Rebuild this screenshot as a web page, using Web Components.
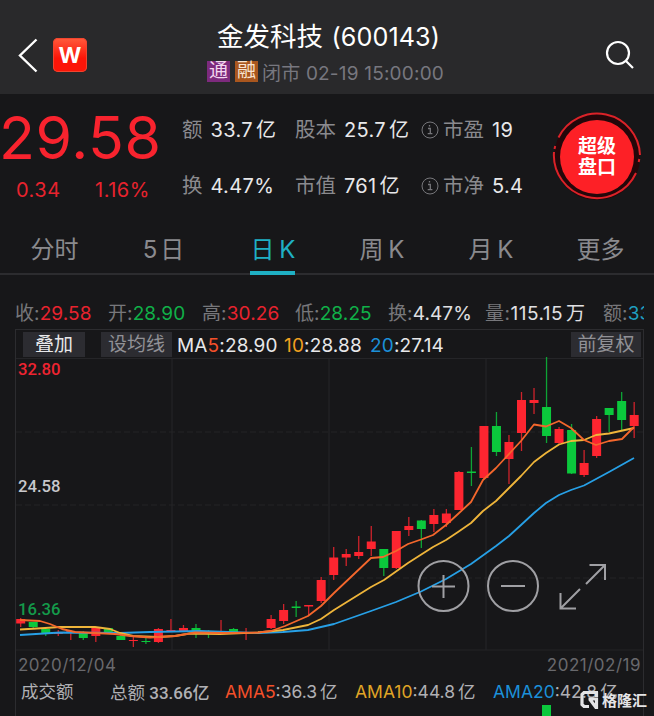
<!DOCTYPE html>
<html lang="zh-CN">
<head>
<meta charset="utf-8">
<title>金发科技 (600143)</title>
<style>
	html, body { margin: 0; background: #171719; }
	body { width: 654px; height: 716px; overflow: hidden; font-family: Inter, "Noto Sans CJK SC", sans-serif; }
</style>
</head>
<body>
<stock-page></stock-page>

<script>
	class NavHeader extends HTMLElement {
		constructor() {
			super();
			this.attachShadow({ mode: 'open' });
			this.shadowRoot.innerHTML = `
				<style>
					:host { display: grid; grid-template-columns: 120px 1fr 120px; height: 94px; background: #29292b; box-sizing: border-box; color: #fff; }
					.left { display: flex; align-items: center; padding: 16px 0 0 17px; gap: 14px; }
					.logo { width: 34px; height: 34px; border-radius: 5px; background: linear-gradient(#ff5b3c, #fb1508 60%); display: flex; align-items: center; justify-content: center; font: 700 22px/34px Inter, sans-serif; box-shadow: inset 0 0 0 1px #f0452f; }
					.mid { display: flex; flex-direction: column; align-items: center; }
					.name { font-size: 26.5px; line-height: 32px; margin-top: 20px; white-space: nowrap; padding-left: 3px; }
					.name span { font-size: 25.2px; letter-spacing: .1px; margin-left: 1px; }
					.sub { display: flex; align-items: center; height: 24px; margin-top: 6px; color: #77777f; font-size: 19px; white-space: nowrap; letter-spacing: .2px; margin-left: -3px; }
					.sub span:last-child { margin-left: -1px; }
					.tag { width: 23px; height: 21px; line-height: 20px; font-size: 19px; text-align: center; color: #f3d6ef; background: #7d2a7d; margin-right: 5px; letter-spacing: 0; }
					.tag.rong { background: #a9561e; color: #f8e3d0; }
					.right { display: flex; align-items: center; justify-content: flex-end; padding: 15px 19px 0 0; }
				</style>
				<div class="left">
					<svg width="22" height="36" viewBox="0 0 22 36" fill="none" stroke="#fff" stroke-width="2.4"><path d="M19.5 2.5 3 18.5l16.500 16"/></svg>
					<div class="logo">W</div>
				</div>
				<div class="mid">
					<div class="name">金发科技 <span>(600143)</span></div>
					<div class="sub"><span class="tag">通</span><span class="tag rong">融</span><span>闭市 02-19 15:00:00</span></div>
				</div>
				<div class="right">
					<svg width="30" height="30" viewBox="0 0 30 30" fill="none" stroke="#fff" stroke-width="2.2"><circle cx="13" cy="13" r="11"/><path d="M21 21l7 7"/></svg>
				</div>
			`;
		}
	}
	customElements.define('nav-header', NavHeader);

	class StatItem extends HTMLElement {
		constructor() {
			super();
			this.attachShadow({ mode: 'open' });
			const info = this.hasAttribute('info')
				? '<svg width="18" height="18" viewBox="0 0 18 18" fill="none" stroke="#77777b" stroke-width="1"><circle cx="9" cy="9" r="8"/><path d="M7 7.500h2.300v5M6.700 12.700h4.700M8.500 4v1.500" stroke-width="1.300"/></svg>'
				: '';
			this.shadowRoot.innerHTML = `
				<style>
					:host { display: flex; align-items: center; height: 28px; line-height: 28px; white-space: nowrap; color: #e8e8ea; font-size: 20px; }
					svg { margin-right: 4px; }
					.label { color: #8a8a8e; font-size: 20.5px; margin-right: 8px; }
					.unit { margin-left: 3px; }
					.value { letter-spacing: .35px; }
				</style>
				${info}<span class="label"><slot name="label"></slot></span><span class="value"><slot></slot></span><span class="unit"><slot name="unit"></slot></span>
			`;
		}
	}
	customElements.define('stat-item', StatItem);

	class SuperButton extends HTMLElement {
		constructor() {
			super();
			this.attachShadow({ mode: 'open' });
			this.shadowRoot.innerHTML = `
				<style>
					:host { display: grid; width: 90px; height: 90px; place-items: center; }
					svg, div { grid-area: 1 / 1; }
					div { color: #fff; font-size: 19px; font-weight: 700; line-height: 21px; text-align: center; z-index: 1; }
				</style>
				<svg width="90" height="90" viewBox="0 0 90 90" fill="none">
					<circle cx="45" cy="45" r="40" stroke="#24070a" stroke-width="6"/>
					<circle cx="45" cy="45" r="37" fill="#fd2026"/>
					<g stroke="#dc2228" stroke-width="2">
						<path d="M6.500 25.500A43 43 0 0 1 88 43"/>
						<path d="M2 40A43 43 0 0 0 84 61"/>
						<path d="M2.500 37l.7-3M87.300 47l-.6 3"/>
					</g>
				</svg>
				<div>超级<br>盘口</div>
			`;
		}
	}
	customElements.define('super-button', SuperButton);

	class QuotePanel extends HTMLElement {
		constructor() {
			super();
			this.attachShadow({ mode: 'open' });
			this.shadowRoot.innerHTML = `
				<style>
					:host { display: flex; height: 130px; }
					.price { width: 182px; color: #f8232e; }
					.big { font-size: 59px; line-height: 70px; margin: 9px 0 0 -1px; letter-spacing: .6px; height: 70px; font-weight: 400; }
					.chg { display: grid; grid-template-columns: 79px auto; padding-left: 16px; margin-top: 4px; font-size: 20px; letter-spacing: .5px; line-height: 26px; color: #e8232e; }
					.stats { width: 370px; display: grid; grid-template-columns: 113px 126px auto; grid-template-rows: 28px 28px; row-gap: 28px; padding-top: 22px; }
					super-button { margin: 18px 0 0 0; }
				</style>
				<div class="price">
					<div class="big">29.58</div>
					<div class="chg"><span>0.34</span><span>1.16%</span></div>
				</div>
				<div class="stats">
					<stat-item><span slot="label">额</span>33.7<span slot="unit">亿</span></stat-item>
					<stat-item><span slot="label">股本</span>25.7<span slot="unit">亿</span></stat-item>
					<stat-item info><span slot="label">市盈</span>19</stat-item>
					<stat-item><span slot="label">换</span>4.47%</stat-item>
					<stat-item><span slot="label">市值</span>761<span slot="unit">亿</span></stat-item>
					<stat-item info><span slot="label">市净</span>5.4</stat-item>
				</div>
				<super-button></super-button>
			`;
		}
	}
	customElements.define('quote-panel', QuotePanel);

	class PeriodTabs extends HTMLElement {
		constructor() {
			super();
			this.attachShadow({ mode: 'open' });
			this.shadowRoot.innerHTML = `
				<style>
					:host { display: grid; grid-template-columns: repeat(6, 1fr); height: 49px; border-bottom: 2px solid #2c2c2f; color: #8a8a8e; font-size: 24px; }
					div { display: flex; justify-content: center; }
					span { height: 47px; line-height: 51px; white-space: nowrap; }
					.on { color: #1fb0c4; border-bottom: 4px solid #1fb0c4; }
					.k { word-spacing: -2px; padding-left: 1px; }
					.d { word-spacing: -4px; }
					.more { padding-left: 2px; }
				</style>
				<div><span>分时</span></div>
				<div><span class="d">5 日</span></div>
				<div><span class="on k">日 K</span></div>
				<div><span class="k">周 K</span></div>
				<div><span class="k">月 K</span></div>
				<div><span class="more">更多</span></div>
			`;
		}
	}
	customElements.define('period-tabs', PeriodTabs);

	class OhlcRow extends HTMLElement {
		constructor() {
			super();
			this.attachShadow({ mode: 'open' });
			this.shadowRoot.innerHTML = `
				<style>
					:host { display: grid; grid-template-columns: 93px 94px 93px 93px 97px 118px auto; margin: 25px 10px 0 15px; height: 28px; line-height: 28px; font-size: 19px; letter-spacing: .1px; color: #e0e0e3; white-space: nowrap; overflow: hidden; }
					i { font-style: normal; color: #77777b; }
					.up { color: #e8232e; }
					.down { color: #10b048; }
					.amt { color: #1f9fc0; }
					.vol { letter-spacing: .5px; }
					.vol u { text-decoration: none; margin-left: 3px; }
				</style>
				<span class="up"><i>收:</i>29.58</span>
				<span class="down"><i>开:</i>28.90</span>
				<span class="up"><i>高:</i>30.26</span>
				<span class="down"><i>低:</i>28.25</span>
				<span><i>换:</i>4.47%</span>
				<span class="vol"><i>量:</i>115.15<u>万</u></span>
				<span class="amt"><i>额:</i>33</span>
			`;
		}
	}
	customElements.define('ohlc-row', OhlcRow);

	class MaBar extends HTMLElement {
		constructor() {
			super();
			this.attachShadow({ mode: 'open' });
			this.shadowRoot.innerHTML = `
				<style>
					:host { display: flex; height: 28px; align-items: center; font-size: 19px; color: #e8e8ea; white-space: nowrap; border-bottom: 1px solid #252528; }
					.btn { height: 25px; line-height: 25px; background: #2c2c31; text-align: center; }
					.add { width: 62px; margin-left: 7px; }
					.set { width: 71px; margin: 0 5px 0 16px; color: #919196; }
					.adj { width: 70px; margin: 0 2px 0 auto; color: #919196; }
					.ma { display: grid; grid-template-columns: 107px 86px auto; padding-top: 3px; letter-spacing: .15px; }
					b { font-weight: 400; }
				</style>
				<div class="btn add">叠加</div>
				<div class="btn set">设均线</div>
				<div class="ma">
					<span>MA<b style="color:#f4502a">5</b>:28.90</span>
					<span><b style="color:#f0a020">10</b>:28.88</span>
					<span><b style="color:#1c90d8">20</b>:27.14</span>
				</div>
				<div class="btn adj">前复权</div>
			`;
		}
	}
	customElements.define('ma-bar', MaBar);

	// r/g, high, body top, body bottom, low
	const CANDLES = [
		['r', 618, 619, 623.5, 627], ['g', 622, 622, 627, 628], ['g', 628, 629, 633, 636], ['r', 630, 633, 634, 636], ['r', 630, 631, 633, 640],
		['g', 631, 633, 638, 640], ['r', 627, 628, 636, 642], ['g', 628, 628, 633, 634], ['g', 635, 636, 640, 640], ['r', 637, 640, 641, 647],
		['g', 638, 641, 642, 644], ['r', 628, 629, 642, 643], ['r', 619, 630, 632, 632], ['r', 625, 628, 631, 632], ['g', 624, 628, 632, 638],
		['g', 630, 632, 633, 638], ['r', 620, 631, 632, 633], ['g', 628, 629, 632, 633], ['r', 628, 632, 633, 640], ['g', 631, 632, 633, 634],
		['r', 615, 619, 628, 629], ['r', 604, 610, 621, 624], ['g', 601, 606.5, 608, 617], ['r', 605, 605, 606.5, 615], ['r', 577, 580, 601, 603],
		['r', 547, 557.5, 575, 580], ['r', 549, 554, 557.5, 566], ['r', 536, 552, 556, 559], ['r', 526, 541.5, 549, 556], ['g', 549, 549, 568, 576],
		['r', 531, 531, 568, 569], ['r', 517, 526, 530, 536], ['g', 520, 520.5, 529, 548], ['r', 509, 515, 524, 532], ['r', 509, 513.5, 523, 527],
		['r', 471, 472, 510, 510], ['g', 447, 471.5, 473, 486], ['r', 426, 426, 478, 479], ['g', 412, 426, 452, 456], ['r', 435, 442, 459, 484],
		['r', 392, 400, 433, 451], ['r', 388, 400, 403, 414], ['g', 357, 407, 436, 443], ['r', 427, 429, 443, 444], ['g', 424, 430, 473.5, 474],
		['r', 450, 463, 475, 477], ['r', 416, 419, 456, 458], ['g', 408, 408, 415, 432], ['g', 392, 401, 420, 430], ['r', 402, 415, 426, 438]
	];

	const LINES = [
		['#27a0e6', '20,635 60,632.500 120,633 150,632 200,631 258,633 283,632 308,630 334,624 371,611 396,602 421,591.500 446,579 471,564 496,546 509,536 521,525 534,513 546,503 559,495 571,490 584,485.500 609,472 634,458'],
		['#efb53a', '20,629.500 45,628 60,627 95,627 110,629 120,633 133,636 158,637 175,636 190,633.500 220,634 258,632.500 283,630 308,625 321,619 334,610 371,587 384,580 408,563 433,547 446,540 458,532 471,523 483,511 496,501 509,488 521,476 534,462 546,453 559,444.500 571,441 584,440 596,435 609,433.500 634,428'],
		['#f4672c', '20,620 40,621 50,624 62,629 75,632 95,633 115,634 130,636 150,637.500 175,636 195,632.500 221,633 258,632.500 271,631 285,626 308,616 321,606 334,593 371,558 383,557 396,551 408,544 421,539.500 433,535 446,525 458,514 471,502 483,480 496,468 509,454 521,441 534,424.500 546,426.500 559,421 571,428 584,440 596,445 609,441 622,439 634,427']
	];

	class KlineChart extends HTMLElement {
		constructor() {
			super();
			this.attachShadow({ mode: 'open' });
			const candles = CANDLES.map(([c, high, top, bottom, low], i) => {
				const x = 20.7 + i * 12.52;
				const color = c === 'r' ? '#fd2530' : '#0bc83c';
				return `<path d="M${x} ${high}V${low}" stroke="${color}" stroke-opacity=".8" stroke-width="1.300"/>
					<rect x="${Math.max(16, x - 4.5)}" y="${top}" width="9" height="${bottom - top}" fill="${color}"/>`;
			}).join('');
			const lines = LINES.map(([color, pts]) => `<polyline points="${pts}" stroke="${color}" stroke-width="1.800" stroke-linejoin="round"/>`).join('');
			this.shadowRoot.innerHTML = `
				<style>
					:host { display: grid; height: 292px; margin-top: -1px; font: 500 16.7px/20px Roboto, sans-serif; }
					svg, .axis { grid-area: 1 / 1; }
					svg { overflow: visible; }
					.axis { display: flex; flex-direction: column; padding: 2px 0 0 2px; color: #c8c8cc; }
					.axis span { height: 20px; }
					.max { color: #ee2431; }
					.mid { margin-top: 97px; }
					.min { margin-top: 103px; color: #149a4a; }
				</style>
				<svg width="627" height="292" viewBox="16 358 627 292" fill="none">
					<g stroke="#242427" stroke-width="1.200">
						<path d="M172 359V650M329 359V650M486 359V650M16 650H643"/>
						<path d="M16 432H643M16 505H643M16 578H643" stroke-dasharray="6 3"/>
					</g>
					${candles}${lines}
					<g stroke="#a0a0a4" stroke-width="2">
						<circle cx="443.500" cy="586" r="25"/><path d="M432 586.500H455M443.500 575V598"/>
						<circle cx="513" cy="586" r="25"/><path d="M501 586H525"/>
						<path d="M586 584 605 565M589.500 565H605V580M580 589 560.500 608.500M560.500 593V608.500H576"/>
					</g>
				</svg>
				<div class="axis"><span class="max">32.80</span><span class="mid">24.58</span><span class="min">16.36</span></div>
			`;
		}
	}
	customElements.define('kline-chart', KlineChart);

	class VolumeRow extends HTMLElement {
		constructor() {
			super();
			this.attachShadow({ mode: 'open' });
			this.shadowRoot.innerHTML = `
				<style>
					:host { display: block; color: #b0b0b4; white-space: nowrap; }
					.dates { display: flex; justify-content: space-between; height: 29px; line-height: 30px; padding: 0 2px; font-size: 17px; letter-spacing: .5px; color: #69696d; }
					.row { display: grid; grid-template-columns: 89px 115px 130px 138px auto; padding-left: 5px; height: 26px; line-height: 26px; font-size: 17.5px; }
					.total { font-family: Roboto, "Noto Sans CJK SC", sans-serif; font-weight: 500; font-size: 17px; }
					.total i { font: 400 17.5px "Noto Sans CJK SC", sans-serif; }
					b { font-weight: 400; }
					u { text-decoration: none; margin-left: 3px; }
					.bar { width: 9px; height: 13px; background: #0bc83c; margin-left: 526px; }
				</style>
				<div class="dates"><span>2020/12/04</span><span>2021/02/19</span></div>
				<div class="row">
					<span>成交额</span>
					<span class="total"><i>总额</i> 33.66亿</span>
					<span><b style="color:#f4502a">AMA5</b>:36.3<u>亿</u></span>
					<span><b style="color:#e0a526">AMA10</b>:44.8<u>亿</u></span>
					<span><b style="color:#1c90d8">AMA20</b>:42.8<u>亿</u></span>
				</div>
				<div class="bar"></div>
			`;
		}
	}
	customElements.define('volume-row', VolumeRow);

	class WaterMark extends HTMLElement {
		constructor() {
			super();
			this.attachShadow({ mode: 'open' });
			this.shadowRoot.innerHTML = `
				<style>
					:host { position: absolute; left: 580px; top: 689px; display: flex; align-items: center; gap: 3px; height: 22px; color: #e4e4e6; font: 700 15px/22px "Noto Sans CJK SC", sans-serif; white-space: nowrap; }
				</style>
				<svg width="19" height="20" viewBox="0 0 19 20" fill="none" stroke="#e4e4e6" stroke-width="3.2"><path d="M18 2.500H4L2 4.500v10l2 2H9M16.500 2v5M8.500 9H16.500V19M10 9.500l6 8"/></svg>
				<span>格隆汇</span>
			`;
		}
	}
	customElements.define('water-mark', WaterMark);

	class StockPage extends HTMLElement {
		constructor() {
			super();
			this.attachShadow({ mode: 'open' });
			this.shadowRoot.innerHTML = `
				<style>
					:host { display: block; position: relative; width: 654px; height: 716px; overflow: hidden; background: #171719; }
					.frame { margin: 1px 10px 0 15px; border: 1px solid #2c2c2f; border-bottom: 0; height: 390px; }
				</style>
				<nav-header></nav-header>
				<quote-panel></quote-panel>
				<period-tabs></period-tabs>
				<ohlc-row></ohlc-row>
				<div class="frame">
					<ma-bar></ma-bar>
					<kline-chart></kline-chart>
					<volume-row></volume-row>
				</div>
				<water-mark></water-mark>
			`;
		}
	}
	customElements.define('stock-page', StockPage);
</script>
</body>
</html>
